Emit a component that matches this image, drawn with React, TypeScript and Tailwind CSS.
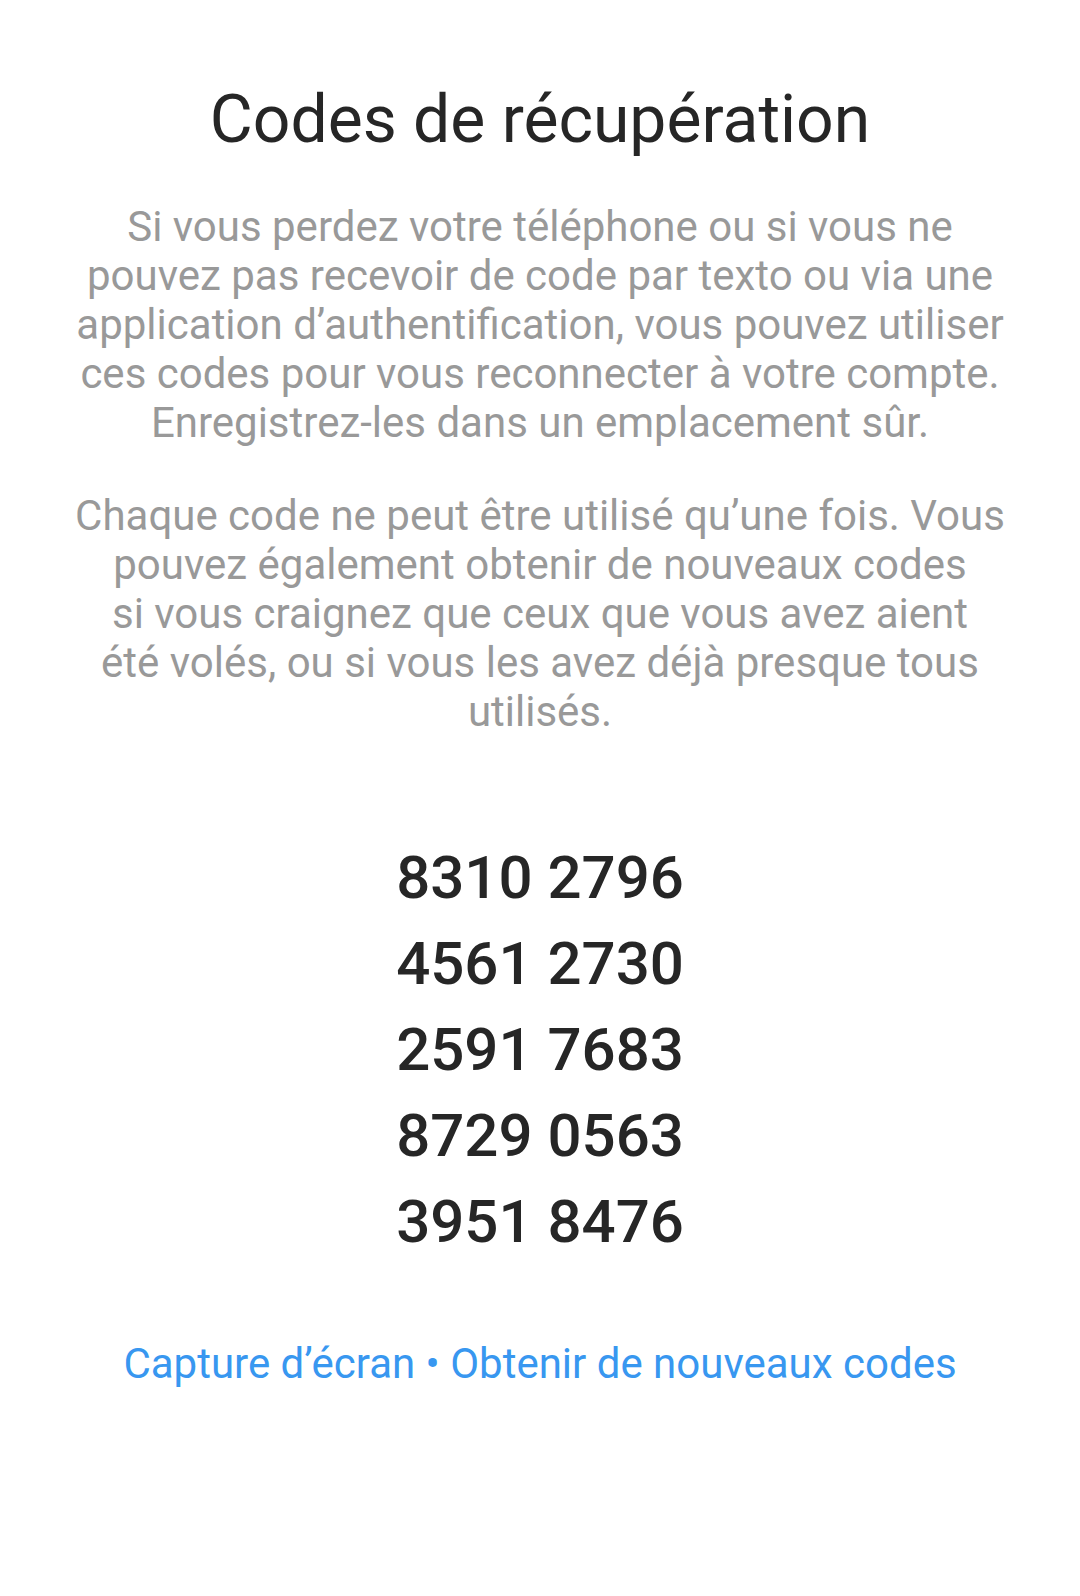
import React from 'react';

const codes = ['8310 2796', '4561 2730', '2591 7683', '8729 0563', '3951 8476'];

export default function App() {
    return (
        <div
            className="w-[1080px] h-[1596px] bg-white flex flex-col items-center text-center"
            style={{ fontFamily: 'Roboto, "Noto Sans", sans-serif' }}
        >
            <h1 className="mt-[80px] text-[66px] leading-[80px] font-normal text-[#262626]">
                Codes de récupération
            </h1>

            <p className="mt-[42px] text-[42px] leading-[49px] text-[#999999]">
                Si vous perdez votre téléphone ou si vous ne<br />
                pouvez pas recevoir de code par texto ou via une<br />
                application d’authentification, vous pouvez utiliser<br />
                ces codes pour vous reconnecter à votre compte.<br />
                Enregistrez-les dans un emplacement sûr.
            </p>

            <p className="mt-[44px] text-[42px] leading-[49px] text-[#999999]">
                Chaque code ne peut être utilisé qu’une fois. Vous<br />
                pouvez également obtenir de nouveaux codes<br />
                si vous craignez que ceux que vous avez aient<br />
                été volés, ou si vous les avez déjà presque tous<br />
                utilisés.
            </p>

            {/* Codes list */}
            <div className="mt-[99px] flex flex-col">
                {codes.map((code) => (
                    <div key={code} className="text-[60px] leading-[86px] font-medium text-[#262626]">
                        {code}
                    </div>
                ))}
            </div>

            <div className="mt-[74px] text-[42px] leading-[49px] text-[#3897f0]">
                Capture d’écran • Obtenir de nouveaux codes
            </div>
        </div>
    );
}
